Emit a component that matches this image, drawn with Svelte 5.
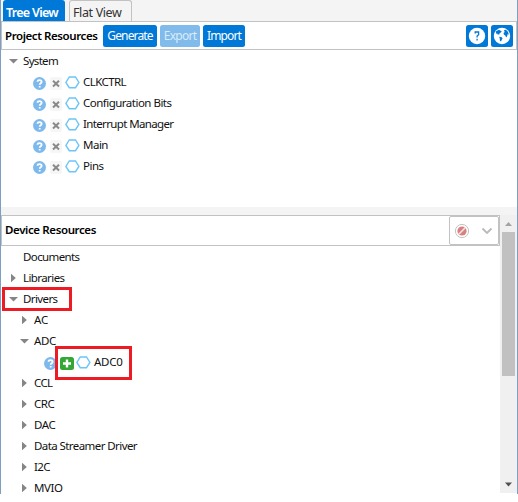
<script>
  const system = [
    { label: 'CLKCTRL', w: 43 },
    { label: 'Configuration Bits', w: 88.5 },
    { label: 'Interrupt Manager', w: 90.5 },
    { label: 'Main', w: 25 },
    { label: 'Pins', w: 20.5 }
  ];
  const device = [
    { label: 'Documents', level: 0, w: 56.5 },
    { label: 'Libraries', level: 0, arrow: 'right', w: 41.5 },
    { label: 'Drivers', level: 0, arrow: 'down', w: 34.5 },
    { label: 'AC', level: 1, arrow: 'right', w: 14 },
    { label: 'ADC', level: 1, arrow: 'down', w: 22 },
    { label: 'ADC0', level: 2, leaf: true, w: 28.5 },
    { label: 'CCL', level: 1, arrow: 'right', w: 18.5 },
    { label: 'CRC', level: 1, arrow: 'right', w: 20.5 },
    { label: 'DAC', level: 1, arrow: 'right', w: 21.5 },
    { label: 'Data Streamer Driver', level: 1, arrow: 'right', w: 103 },
    { label: 'I2C', level: 1, arrow: 'right', w: 16 },
    { label: 'MVIO', level: 1, arrow: 'right', w: 28.5 }
  ];

  // Evens out glyph advances so a label occupies its nominal width.
  function fit(node, width) {
    const natural = node.getBoundingClientRect().width;
    node.style.letterSpacing = (width - natural) / node.textContent.length + 'px';
  }
</script>

{#snippet arrow(dir)}
  <svg class="arrow" width="10" height="10" viewBox="0 0 10 10">
    {#if dir === 'down'}<path d="M1 3h9L5.5 7.5z" />{:else if dir === 'right'}<path d="M3 .8v8.4L7.8 5z" />{/if}
  </svg>
{/snippet}

{#snippet help()}
  <svg class="help" width="13" height="13" viewBox="0 0 13 13">
    <circle cx="6.5" cy="6.5" r="6.5" fill="#7db9ec" />
    <path d="M4.5 4.8C4.6 2.6 8.6 2.6 8.6 4.9C8.6 6.2 6.7 6.2 6.7 7.7M6.7 8.9v1.7" fill="none" stroke="#fff" stroke-width="1.8" />
  </svg>
{/snippet}

{#snippet hex()}
  <svg class="hex" width="15" height="13" viewBox="0 0 15 13">
    <path d="M4.3 1h6.2l3.4 5.4-3.4 5.3H4.3L.9 6.4z" fill="#fff" stroke="#6cc5f7" stroke-width="1.4" />
  </svg>
{/snippet}

<div class="page">
  <div class="window">
    <nav class="tabs">
      <div class="tab active"><b use:fit={52}>Tree View</b></div>
      <div class="tab flat"><span use:fit={48.5}>Flat View</span></div>
    </nav>

    <header class="bar project">
      <div class="title"><b use:fit={92.5}>Project Resources</b></div>
      <button class="generate"><span use:fit={45.5}>Generate</span></button>
      <button class="export"><span use:fit={32.5}>Export</span></button>
      <button class="import"><span use:fit={34}>Import</span></button>
      <div class="tools">
        <button class="icon" aria-label="Help">
          <svg width="18" height="18" viewBox="0 0 18 18">
            <circle cx="9" cy="9" r="8.2" fill="#fff" />
            <path d="M7.2 6.6V5H10.6V7.7L9.1 9.1V10.6M9.1 11.8v1.6" fill="none" stroke="#0078d7" stroke-width="1.3" />
          </svg>
        </button>
        <button class="icon" aria-label="Web">
          <svg width="18" height="18" viewBox="0 0 18 18">
            <circle cx="9" cy="9" r="8.2" fill="#fff" />
            <path d="M3 4.3L6 2.7l1.5 1.1 1.2.1-.7 1.6-1.2.5-.5 1.5-1.7.1-.5-1.2-1 .3zM6.2 9.8l2.1.2 1.3 1.2-.7 1.3-.9 2-1.1-.8-.1-1.9zM10.9 3.2l2-.5 2 2.1 1 2.7-1.4-.2-.2 1.5-1 1.7-1.1-2.1-1.3-.8-.4-1.7 1.2-.9z" fill="#0078d7" />
          </svg>
        </button>
      </div>
    </header>

    <section class="tree system">
      <div class="row level0">{@render arrow('down')}<span class="label" use:fit={35}>System</span></div>
      {#each system as item}
        <div class="row module">
          {@render help()}
          <svg class="remove" width="12" height="13" viewBox="0 0 12 13">
            <rect width="12" height="13" rx="2" fill="#f6f6f6" />
            <path d="M3 3.8l6 5.6M9 3.8L3 9.4" stroke="#888" stroke-width="2" />
          </svg>
          {@render hex()}
          <span class="label" use:fit={item.w}>{item.label}</span>
        </div>
      {/each}
    </section>

    <section class="device">
      <div class="content">
        <header class="bar resources">
          <div class="title"><b use:fit={91}>Device Resources</b></div>
          <div class="filter">
            <svg width="16" height="16" viewBox="0 0 16 16">
              <circle cx="8" cy="8" r="6.6" fill="#fff" stroke="#c3c3c3" />
              <circle cx="8" cy="8" r="4.6" fill="#d88080" />
              <path d="M4.8 11.2l6.4-6.4" stroke="#f4e3e3" stroke-width="1.6" />
            </svg>
            <svg class="chevron" width="12" height="8" viewBox="0 0 12 8">
              <path d="M1.5 1.5L6 6l4.5-4.5" fill="none" stroke="#b9b9b9" stroke-width="1.8" />
            </svg>
          </div>
        </header>
        <div class="tree">
          {#each device as item}
            <div class="row level{item.level}">
              {#if item.leaf}
                {@render help()}
                <svg class="add" width="14" height="13" viewBox="0 0 14 13">
                  <rect width="14" height="13" rx="2.5" fill="#35a735" />
                  <path d="M7 2.5v8M3 6.5h8" stroke="#fff" stroke-width="2.4" />
                </svg>
                {@render hex()}
              {:else}
                {@render arrow(item.arrow)}
              {/if}
              <span class="label" use:fit={item.w}>{item.label}</span>
            </div>
          {/each}
        </div>
      </div>
      <div class="scroll">
        <svg width="17" height="17" viewBox="0 0 17 17"><path d="M5 11h7L8.5 7z" fill="#a3a3a3" /></svg>
        <div class="thumb"></div>
        <svg width="17" height="17" viewBox="0 0 17 17"><path d="M5 6.5h7l-3.5 4z" fill="#505050" /></svg>
      </div>
    </section>
  </div>
  <div class="mark drivers"></div>
  <div class="mark adc"></div>
</div>

<style>
  .page {
    position: relative;
    width: 518px;
    height: 502px;
    background: #fff;
    overflow: hidden;
    font: 11.5px 'Noto Sans', 'Open Sans', sans-serif;
    color: #111;
  }
  .page * { box-sizing: border-box; }
  svg { display: block; flex: none; }
  span, b { white-space: nowrap; flex: none; }
  b { font-weight: 600; }
  .window {
    display: flex;
    flex-direction: column;
    height: 494px;
    border: solid #7e9fc0;
    border-width: 0 1px;
  }
  .tabs {
    display: flex;
    height: 21px;
    background: #f4f4f4;
    padding-left: 2px;
    gap: 4px;
    font-size: 12.5px;
  }
  .tab {
    height: 21px;
    border-radius: 3px 3px 0 0;
    line-height: 25px;
  }
  .active { width: 62px; padding-left: 3px; background: #0078d7; color: #fff; }
  .flat { width: 63px; padding-left: 3px; border: 1px solid #c2c2c2; border-bottom: 0; line-height: 24px; color: #333; }
  .bar {
    display: flex;
    align-items: center;
    border: 1px solid #c2c2c2;
    background: #fff;
    color: #000;
  }
  .project { height: 29px; padding: 0 3px; }
  .title { width: 98px; padding-bottom: 1px; }
  .resources .title { padding-bottom: 2px; }
  button {
    display: flex;
    align-items: center;
    justify-content: center;
    height: 22px;
    padding: 0;
    margin: 0 3px 0 0;
    border: 0;
    border-radius: 2.5px;
    background: #0078d7;
    color: #fff;
    font: 12px 'Noto Sans', sans-serif;
  }
  .generate { width: 54px; }
  .export { width: 40px; background: #80bbeb; color: #d9ebfa; }
  .import { width: 42px; }
  .tools { display: flex; gap: 3px; margin-left: auto; }
  .icon { width: 22px; margin: 0; }
  .system { height: 157px; }
  .row { display: flex; align-items: center; height: 21px; }
  .label { line-height: 20px; }
  .level0 { padding-left: 7px; }
  .level1 { padding-left: 18px; }
  .arrow { fill: #858585; margin-right: 5px; }
  .module { padding-left: 32px; }
  .help, .remove, .add { margin-top: 3px; }
  .help { margin-right: 4px; }
  .remove { margin-right: 3px; }
  .add { margin-right: 2px; }
  .hex { margin-top: 1px; margin-right: 3px; }
  .level2 { padding-left: 43px; }
  .level2 .help { margin-right: 3px; }
  .device { display: flex; height: 287px; border-top: 8px solid #f4f4f4; }
  .content { width: 499px; overflow: hidden; }
  .resources { height: 31px; padding-left: 3px; }
  .filter {
    display: flex;
    align-items: center;
    width: 50px;
    height: 29px;
    margin-left: auto;
    padding-left: 4px;
    border: 1px solid #c2c2c2;
    border-radius: 2px;
  }
  .chevron { margin-left: 11px; }
  .scroll { display: flex; flex-direction: column; height: 278px; width: 17px; background: #f0f0f0; }
  .thumb { width: 13px; height: 144px; margin: 0 auto auto; background: #c1c1c1; flex: none; }
  .mark { position: absolute; border: 3px solid #ed1c24; }
  .drivers { left: 2px; top: 287px; width: 70px; height: 24px; }
  .adc { left: 55px; top: 346px; width: 77px; height: 34px; }
</style>
